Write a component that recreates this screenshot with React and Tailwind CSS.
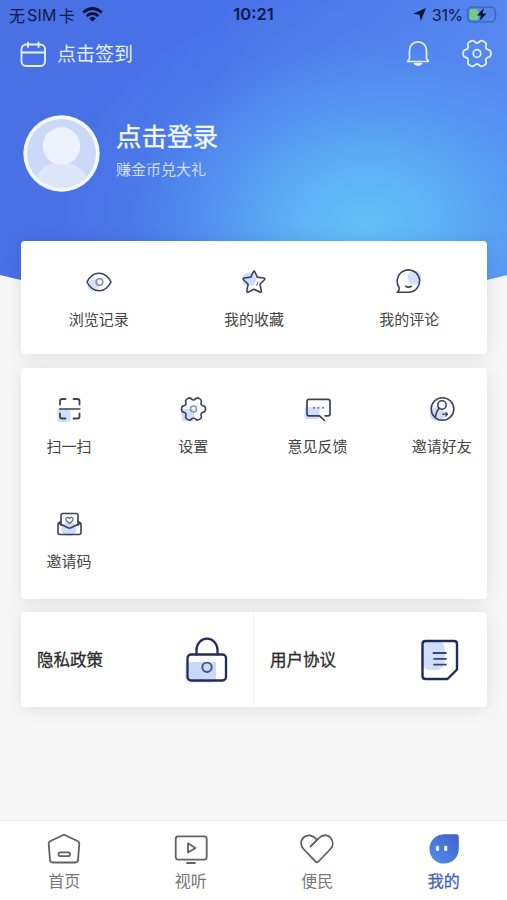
import React from 'react';

const INK = '#3d4257';
const NAVY = '#232c57';

// six-toothed gear outline, corners smoothed through the segment midpoints
const gearPath = (cx, cy, outer, inner) => {
	const pts = [];
	for (let i = 0; i < 6; i++) {
		[
			[-13, outer],
			[13, outer],
			[23, inner],
			[37, inner],
		].forEach(([offset, r]) => {
			const a = ((i * 60 + offset) * Math.PI) / 180;
			pts.push([cx + r * Math.cos(a), cy + r * Math.sin(a)]);
		});
	}
	const mid = (p, q) => [(p[0] + q[0]) / 2, (p[1] + q[1]) / 2];
	const f = (p) => p[0].toFixed(2) + ' ' + p[1].toFixed(2);
	let d = 'M' + f(mid(pts[pts.length - 1], pts[0]));
	pts.forEach((p, i) => {
		d += 'Q' + f(p) + ' ' + f(mid(p, pts[(i + 1) % pts.length]));
	});
	return d + 'Z';
};

const Svg = ({ size = 28, width, height, stroke = INK, strokeWidth = 1.6, className = '', children }) => (
	<svg
		className={'block shrink-0 ' + className}
		width={width || size}
		height={height || size}
		viewBox={`0 0 ${width || size} ${height || size}`}
		fill="none"
		stroke={stroke}
		strokeWidth={strokeWidth}
		strokeLinecap="round"
		strokeLinejoin="round"
	>
		{children}
	</svg>
);

const EyeIcon = () => (
	<Svg>
		<circle cx="8.5" cy="17.5" r="6" fill="#d5e0fb" stroke="none" />
		<path d="M2 14C5 8 9.500 5.200 14 5.200S23 8 26 14C23 20 18.500 22.800 14 22.800S5 20 2 14Z" />
		<circle cx="14.500" cy="14" r="3.300" stroke="#8790a8" />
	</Svg>
);

const StarIcon = () => (
	<Svg>
		<circle cx="9" cy="11.500" r="7" fill="#cfdcfb" stroke="none" />
		<path d="M13.300 3.800Q14 2.200 14.800 3.800L17.300 9.100L23.800 10Q25.700 10.400 24.400 11.800L20 16.200L21.300 22.900Q21.500 24.900 19.700 24L14.100 21.300L8.500 24Q6.700 24.900 6.900 22.900L8.100 16.200L3.600 11.800Q2.300 10.400 4.200 10L10.800 9.100Z" />
		<path d="M17.800 14.200Q17.800 16 16.600 17.200" strokeWidth="1.200" stroke="#6d748c" />
	</Svg>
);

const CommentIcon = () => (
	<Svg>
		<circle cx="19.500" cy="9.500" r="7" fill="#d2dffb" stroke="none" />
		<path d="M2.300 24.300H13.300A11.200 11.200 0 1 0 4 19.200C4.800 21 4 22.600 2.300 24.300Z" />
		<path d="M10.700 18.300Q13.500 20 16.300 18.300" />
	</Svg>
);

const ScanIcon = () => (
	<Svg>
		<rect x="2.500" y="14" width="13" height="13" rx="1" fill="#cfdffc" stroke="none" />
		<path d="M5 9.500V6Q5 4 7 4H10.500M18.500 4H22.500Q24.500 4 24.500 6V9.500M24.500 18.500V21.500Q24.500 23.500 22.500 23.500H18.500M10.500 23.500H7Q5 23.500 5 21.500V18.500" strokeWidth="1.800" />
		<path d="M4.500 14H25" strokeWidth="1.300" />
	</Svg>
);

const GearIcon = () => (
	<Svg>
		<rect x="2.500" y="14" width="12.500" height="12.500" rx="2" fill="#cfdffc" stroke="none" />
		<path d={gearPath(14.5, 14, 12.3, 9)} />
		<circle cx="14.500" cy="14" r="3" stroke="#7f93bd" strokeWidth="1.500" />
	</Svg>
);

const FeedbackIcon = () => (
	<Svg>
		<rect x="0.500" y="12" width="15" height="12" rx="2" fill="#d0defb" stroke="none" />
		<path d="M21 20.800H24Q26 20.800 26 18.800V6.300Q26 4.300 24 4.300H5Q3 4.300 3 6.300V18.800Q3 20.800 5 20.800H15.500L20.300 25.500" strokeWidth="1.700" />
		<path d="M10 12.500V13M14.500 12.500V13M19 12.500V13" strokeWidth="1.700" stroke="#5d6c95" />
	</Svg>
);

const InviteIcon = () => (
	<Svg>
		<circle cx="9.500" cy="19" r="7.500" fill="#cfdefb" stroke="none" />
		<circle cx="14.500" cy="14" r="11.300" />
		<circle cx="14" cy="10" r="4.200" />
		<path d="M11 13.500C8.500 16 8 18.500 7.200 22.500" />
		<path d="M14.500 19.200H19.500M17.800 17.400L19.500 19.200L17.800 21" strokeWidth="1.300" />
	</Svg>
);

const MailIcon = () => (
	<Svg>
		<circle cx="14" cy="19" r="7.500" fill="#cddcfb" stroke="none" />
		<path d="M6 15.500V5.500Q6 3.500 8 3.500H21Q23 3.500 23 5.500V15.500" />
		<path d="M6 11.500Q3 12.500 3 14V22.500Q3 24.500 5 24.500H24Q26 24.500 26 22.500V14Q26 12.500 23 11.500M3.300 13L13 17.800Q14.500 18.500 16 17.800L25.700 13" />
		<path d="M14.500 13.700L11.300 10.500C9.800 8.200 12.800 6.300 14.500 8.600C16.200 6.300 19.200 8.200 17.700 10.500Z" strokeWidth="1.200" stroke="#5b6379" />
	</Svg>
);

const LockIcon = () => (
	<Svg width={46} height={50} stroke={NAVY} strokeWidth={2.3}>
		<rect x="1" y="27" width="31" height="21" rx="4" fill="#e4ecfd" stroke="none" />
		<rect x="5" y="27" width="27" height="17" fill="#c7dafb" stroke="none" />
		<path d="M12.500 19.500V15A10.500 11.300 0 0 1 33.500 15V19.500" />
		<rect x="3.500" y="19.500" width="38.500" height="26" rx="3.500" />
		<circle cx="23" cy="32.300" r="4.700" stroke="#46506f" strokeWidth="1.900" />
	</Svg>
);

const DocIcon = () => (
	<Svg width={42} height={44} stroke={NAVY} strokeWidth={2.4}>
		<rect x="2" y="2" width="24" height="30" rx="9" fill="#cfdefc" stroke="none" />
		<path d="M6.500 3H35Q38 3 38 6V31.500L28.500 41H6.500Q3.500 41 3.500 38V6Q3.500 3 6.500 3Z" />
		<path d="M14.500 15H27M15 20.800H27M15 26.600H27" strokeWidth="1.800" stroke="#39456f" />
	</Svg>
);

const HomeIcon = () => (
	<Svg size={36} stroke="#626262" strokeWidth={1.8}>
		<path d="M16.800 4.200Q18 3.700 19.200 4.200L31.500 10Q33.500 11 33.300 13L32 29Q31.700 31.500 29.300 31.500H6.700Q4.300 31.500 4 29L2.700 13Q2.500 11 4.500 10Z" />
		<rect x="12.500" y="21.300" width="11.500" height="3.800" rx="1.900" />
	</Svg>
);

const VideoIcon = () => (
	<Svg size={36} stroke="#626262" strokeWidth={1.8}>
		<rect x="2.700" y="5.300" width="31" height="23.300" rx="2.500" />
		<path d="M15 12.300L22.500 16.900L15 21.500Z" />
		<path d="M14 32H22" />
	</Svg>
);

const HeartIcon = () => (
	<Svg size={36} stroke="#626262" strokeWidth={1.8}>
		<path d="M11.500 15.500L19.500 7.500C23 3.500 28.500 3 31.800 7C34.500 10.500 34.300 15 31.500 18L19.500 30.500Q18 32 16.500 30.500L4.500 18C1.200 14.500 1.500 9.500 4.500 6.500C8.500 3 14 4 17.800 8.500" />
	</Svg>
);

const MineIcon = () => (
	<Svg size={36} stroke="none">
		<defs>
			<linearGradient id="mine" x1="0" y1="1" x2="1" y2="0">
				<stop offset="0" stopColor="#5490f0" />
				<stop offset="1" stopColor="#3f5ecb" />
			</linearGradient>
		</defs>
		<path d="M17.500 3.200H30Q32.800 3.200 32.800 6V17.500A14.700 14.700 0 1 1 17.500 3.200Z" fill="url(#mine)" />
		<rect x="9.800" y="14.800" width="3.300" height="5.200" rx="1.200" fill="#d9f2ff" />
		<rect x="18" y="14.800" width="3.300" height="5.200" rx="1.200" fill="#d9f2ff" />
	</Svg>
);

const records = [
	{ label: '浏览记录', Icon: EyeIcon },
	{ label: '我的收藏', Icon: StarIcon },
	{ label: '我的评论', Icon: CommentIcon },
];

const tools = [
	{ label: '扫一扫', Icon: ScanIcon },
	{ label: '设置', Icon: GearIcon },
	{ label: '意见反馈', Icon: FeedbackIcon },
	{ label: '邀请好友', Icon: InviteIcon },
	{ label: '邀请码', Icon: MailIcon },
];

const tabs = [
	{ label: '首页', Icon: HomeIcon },
	{ label: '视听', Icon: VideoIcon },
	{ label: '便民', Icon: HeartIcon },
	{ label: '我的', Icon: MineIcon, active: true },
];

const StatusBar = () => (
	<div className="grid h-[29px] grid-cols-3 items-center px-[9px] text-[#10194a]">
		<div className="flex items-center text-[16px]">
			<span>无</span>
			<span className="mx-[2px] font-[Inter] tracking-[0.2px]">SIM</span>
			<span>卡</span>
			<svg className="ml-[7px]" width="21" height="15" viewBox="0 0 21 15" fill="none" stroke="#0b1238" strokeWidth="2.800">
				<path d="M1.200 5.500Q10.500 -2.500 19.800 5.500" />
				<path d="M4.600 9Q10.500 4 16.400 9" />
				<path d="M10.500 14.500L7.200 11.300Q10.500 8.700 13.800 11.300Z" fill="#0b1238" stroke="none" />
			</svg>
		</div>
		<span className="text-center font-[Inter] text-[16.500px] font-semibold">10:21</span>
		<div className="-mr-px flex items-center justify-end font-[Inter] text-[16px]">
			<svg className="mr-[6px]" width="13" height="13" viewBox="0 0 12 12" fill="#0b1238">
				<path d="M12 0L7.200 12L6 6.200L0 5.200Z" />
			</svg>
			<span className="tracking-[-0.300px]">31%</span>
			<svg className="ml-[4px]" width="32" height="17" viewBox="0 0 32 17" fill="none">
				<rect x="0.700" y="1.200" width="27.500" height="14.600" rx="4" stroke="#3d62ad" strokeWidth="1.300" />
				<rect x="2.500" y="3" width="9" height="11" rx="2" fill="#72cd82" />
				<path d="M30 6.500Q31.500 8.500 30 10.500Z" fill="#3d62ad" />
				<path d="M17 2L10 9.500H14L12.500 15L19.500 7.500H15.500Z" fill="#0b1238" />
			</svg>
		</div>
	</div>
);

const Header = () => (
	<header className="h-[305px] bg-[radial-gradient(ellipse_310px_240px_at_365px_225px,#63bff7_0%,rgba(95,183,246,0.92)_22%,rgba(88,162,244,0.7)_48%,rgba(84,140,240,0.3)_75%,rgba(80,128,236,0)_100%),linear-gradient(100deg,#4a70e4_0%,#4771e8_40%,#588bf0_100%)] [clip-path:ellipse(586px_305px_at_50%_0)]">
		<StatusBar />
		<div className="flex h-[49px] items-center justify-between pr-[15px] pl-[19px]">
			<div className="flex items-center gap-[10px]">
				<Svg size={28} stroke="#e3f1ff" strokeWidth={1.8}>
					<rect x="2.500" y="4.500" width="23.500" height="21.500" rx="4.500" />
					<path d="M2.500 12.500H26M9 2.500V7M19.500 2.500V7" />
				</Svg>
				<span className="text-[19px] text-[#e3f1ff]">点击签到</span>
			</div>
			<div className="flex items-center gap-[29px]">
				<Svg size={30} stroke="#e3f1ff" strokeWidth={1.7}>
					<path d="M4.500 22.500H25.500L23.500 19.500V12C23.500 6.500 20 2.800 15 2.800S6.500 6.500 6.500 12V19.500Z" />
					<path d="M11.500 24.500Q15 27.500 18.500 24.500Z" fill="#e3f1ff" />
				</Svg>
				<Svg size={30} stroke="#e3f1ff" strokeWidth={1.8}>
					<path d={gearPath(15, 14.5, 14.3, 10.6)} />
					<circle cx="15" cy="14.500" r="3.800" />
				</Svg>
			</div>
		</div>
		<div className="mt-[37px] flex items-start gap-4 pl-[23px]">
			<svg className="block" width="77" height="77" viewBox="0 0 77 77">
				<defs>
					<clipPath id="face">
						<circle cx="38.500" cy="38.500" r="34.500" />
					</clipPath>
				</defs>
				<circle cx="38.500" cy="38.500" r="38.200" fill="#f3f9ff" />
				<g clipPath="url(#face)">
					<rect width="77" height="77" fill="#ccd8f7" />
					<circle cx="38.500" cy="77" r="30" fill="#dee6fa" />
					<circle cx="38.500" cy="31" r="18.700" fill="#eef2fc" />
				</g>
			</svg>
			<div className="pt-[3px]">
				<p className="text-[25.500px] leading-[34px] text-[#f4faff] [-webkit-text-stroke:0.4px_#f4faff]">点击登录</p>
				<p className="mt-[6px] text-[15px] leading-[22px] text-[#cfe0fd]">赚金币兑大礼</p>
			</div>
		</div>
	</header>
);

const Item = ({ label, Icon }) => (
	<div className="flex flex-col items-center">
		<Icon />
		<span className="mt-3 text-[15px] leading-[22px] whitespace-nowrap text-[#444]">{label}</span>
	</div>
);

const CARD = 'rounded-[4px] bg-white shadow-[0_2px_18px_rgba(0,0,0,0.1)]';

const App = () => {
	return (
		<div className="flex h-[900px] w-[507px] flex-col overflow-hidden bg-[#f7f7f7] font-['Noto_Sans_CJK_SC',sans-serif]">
			<Header />
			<main className="relative -mt-16 flex flex-1 flex-col gap-[13.500px] pr-5 pl-[21px]">
				<section className={CARD + ' grid h-[113px] grid-cols-3 pt-[27px]'}>
					{records.map((item) => (
						<Item key={item.label} {...item} />
					))}
				</section>
				<section className={CARD + ' h-[231px] pt-[27px]'}>
					<div className="-mr-[17px] -ml-[14px] grid grid-cols-4 gap-y-[53px]">
						{tools.map((item) => (
							<Item key={item.label} {...item} />
						))}
					</div>
				</section>
				<section className={CARD + ' grid h-[95px] grid-cols-2 text-[16.500px] text-[#2b2b2b] [-webkit-text-stroke:0.3px_#2b2b2b]'}>
					<div className="flex items-center justify-between border-r border-[#f1f1f1] pr-[23px] pl-4">
						<span>隐私政策</span>
						<LockIcon />
					</div>
					<div className="flex items-center justify-between pr-[26px] pl-4">
						<span>用户协议</span>
						<DocIcon />
					</div>
				</section>
			</main>
			<nav className="relative grid h-20 grid-cols-4 border-t border-[#ebebeb] bg-white pt-[10px] pl-px">
				{tabs.map(({ label, Icon, active }) => (
					<div key={label} className="flex flex-col items-center">
						<Icon />
						<span className={'mt-[2px] text-[16px] leading-[22px] ' + (active ? 'text-[#4562bd] [-webkit-text-stroke:0.3px_#4562bd]' : 'text-[#777]')}>
							{label}
						</span>
					</div>
				))}
			</nav>
		</div>
	);
};

export default App;
